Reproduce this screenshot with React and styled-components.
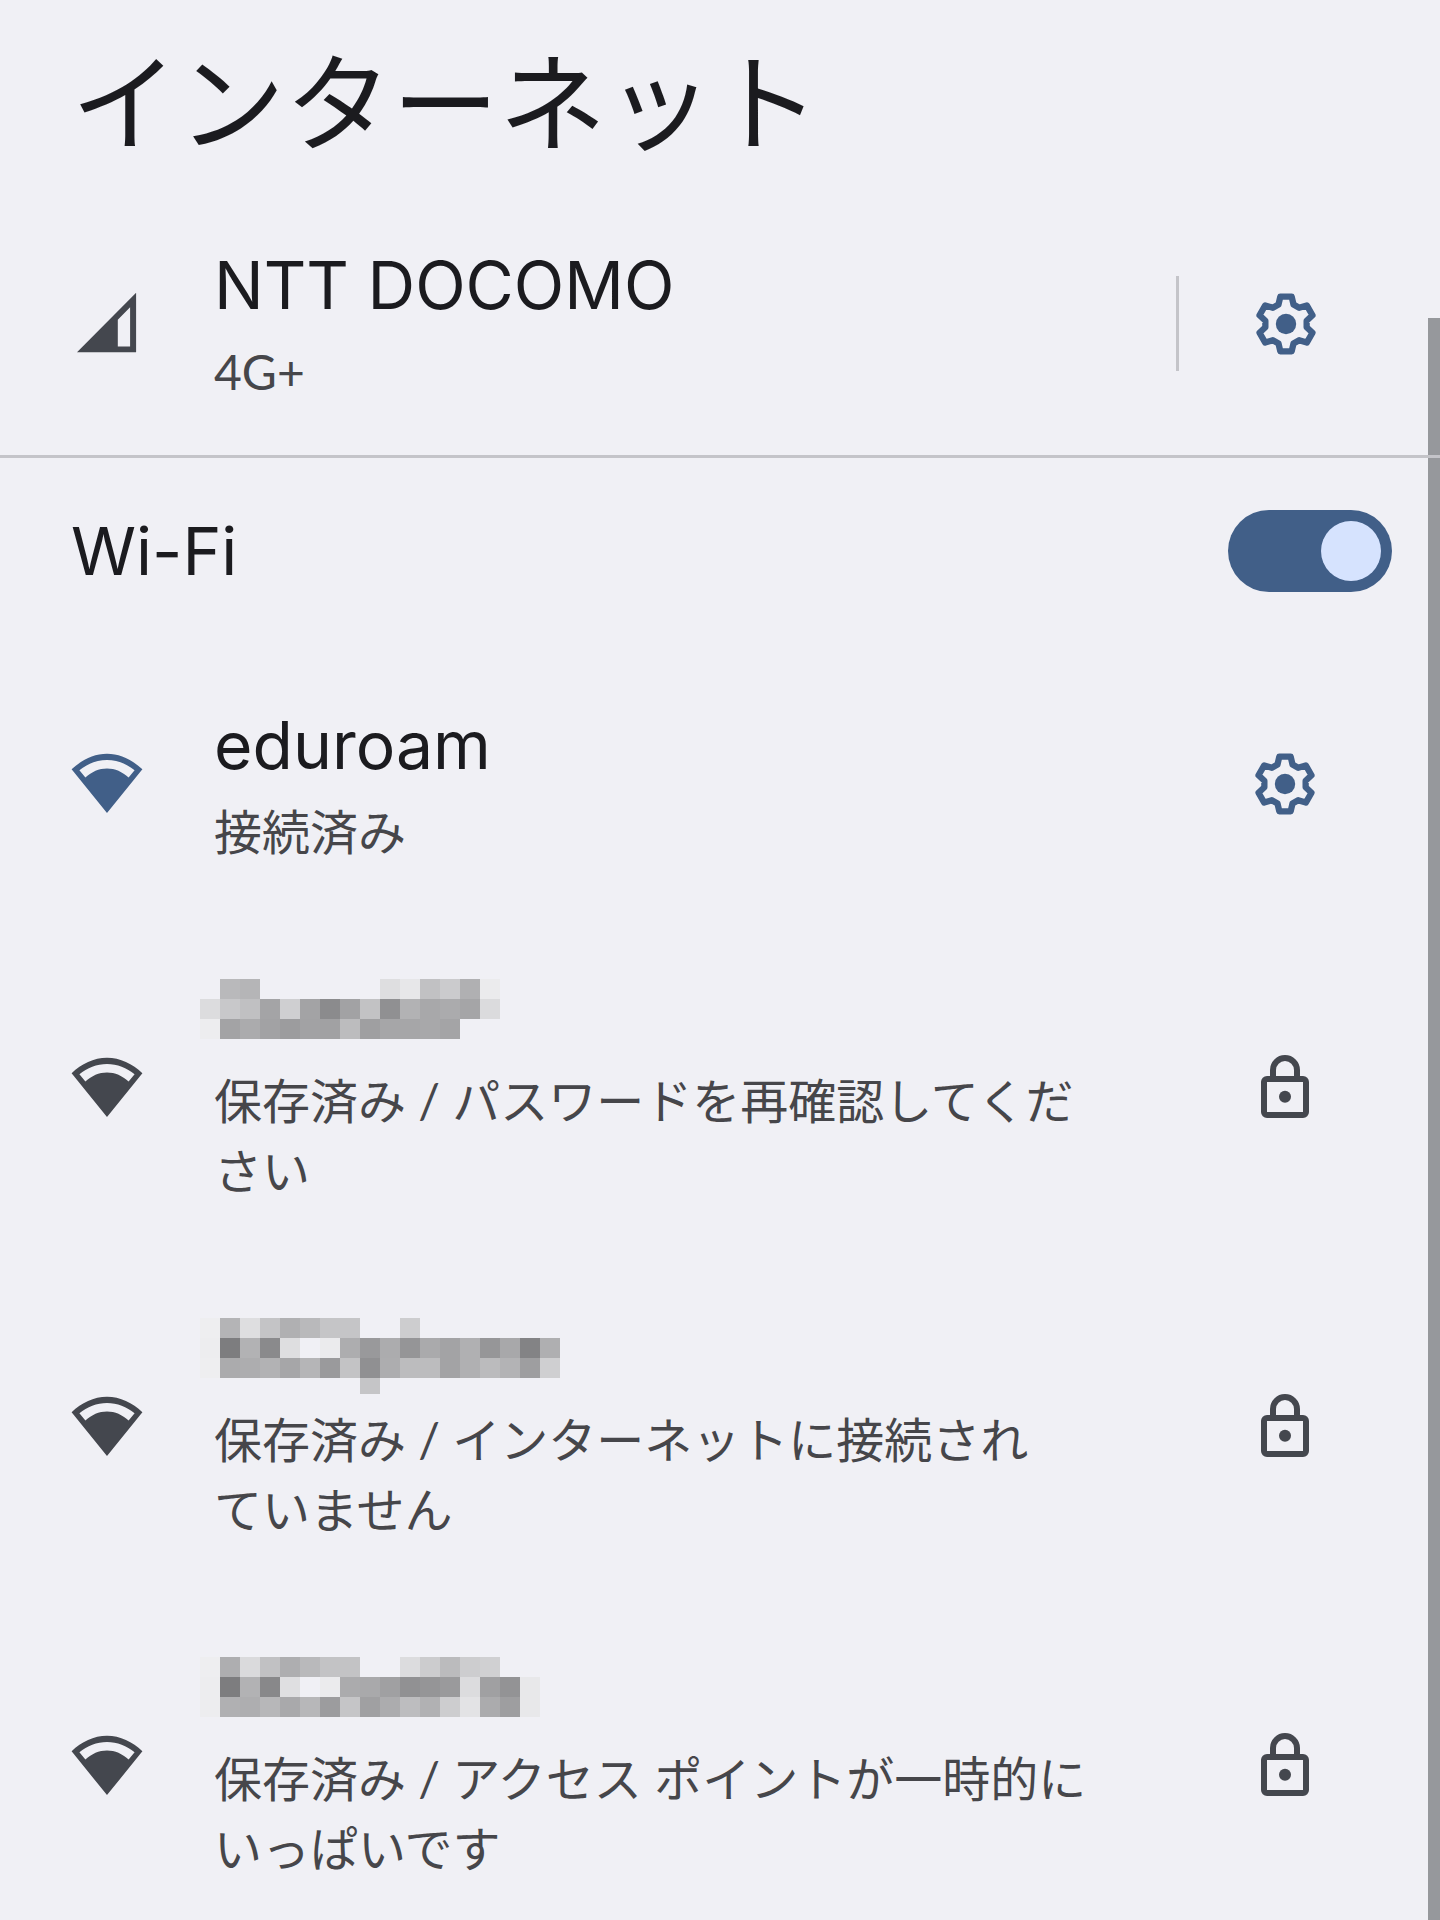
import React, { useState } from 'react'
import styled, { createGlobalStyle } from 'styled-components'

const colors = {
    background: '#f0f0f5',
    text: '#1b1b1f',
    secondary: '#46464a',
    icon: '#44474e',
    accent: '#415f88',
    thumb: '#d6e3fe',
    line: '#c4c4c9',
    scrollbar: '#96989c'
}

const GlobalStyle = createGlobalStyle`
    * {
        box-sizing: border-box;
    }
    body {
        margin: 0;
        background: ${colors.background};
        color: ${colors.text};
        font-family: Inter, "Noto Sans CJK JP", sans-serif;
    }
`

const Screen = styled.main`
    position: relative;
    height: 100vh;
    overflow: hidden;
`

const ScrollArea = styled.div`
    height: 100%;
    overflow-y: auto;
    scrollbar-width: none;
`

const ScrollThumb = styled.div`
    position: absolute;
    top: 318px;
    right: 0;
    bottom: 0;
    width: 12px;
    background: ${colors.scrollbar};
`

const Title = styled.h1`
    height: 188px;
    margin: 0;
    padding: 17px 71px 0;
    font-family: "Noto Sans CJK JP", sans-serif;
    font-size: 107px;
    font-weight: 400;
    line-height: 160px;
`

const Row = styled.div`
    display: flex;
    align-items: center;
    gap: 71px;
    padding: 52px 119px 50px 71px;
`

const MobileRow = styled(Row)`
    position: relative;
    z-index: 1;
    padding-right: 118px;
    padding-bottom: 48px;
    border-bottom: 3px solid ${colors.line};
`

const SwitchRow = styled.label`
    display: flex;
    align-items: center;
    justify-content: space-between;
    height: 186px;
    margin-bottom: 4px;
    padding: 0 48px 0 71px;
    font-size: 66px;
    line-height: 90px;
`

const Switch = styled.input`
    appearance: none;
    display: flex;
    align-items: center;
    width: 164px;
    height: 82px;
    margin: 0;
    padding: 0 11px;
    border-radius: 41px;
    background: ${({checked}) => checked ? colors.accent : colors.line};
    cursor: pointer;
    &::before {
        content: '';
        width: 60px;
        height: 60px;
        margin-left: ${({checked}) => checked ? 'auto' : '0'};
        border-radius: 50%;
        background: ${colors.thumb};
    }
`

const NetworkList = styled.ul`
    margin: 0;
    padding: 0;
    list-style: none;
`

const Details = styled.div`
    flex: 1;
    min-width: 0;
`

const Name = styled.div`
    height: 97px;
    font-size: 66px;
    line-height: 90px;
`

const HiddenName = styled.div`
    height: 97px;
    margin-left: -14px;
    padding-top: 10px;
    svg {
        display: block;
    }
`

const Summary = styled.div`
    font-family: Lato, "Noto Sans CJK JP", sans-serif;
    font-size: 48px;
    line-height: 70px;
    white-space: pre-line;
    color: ${colors.secondary};
`

const Icon = styled.svg`
    display: block;
    flex: none;
    width: 72px;
    height: 72px;
    color: ${({$accent}) => $accent ? colors.accent : colors.icon};
`

const IconButton = styled.button`
    flex: none;
    padding: 0;
    border: 0;
    background: none;
    cursor: pointer;
`

const Separator = styled.div`
    width: 3px;
    height: 95px;
    background: ${colors.line};
`

// six teeth, each one a tip and the valley that follows it
const gearPoints = [0, 60, 120, 180, 240, 300].flatMap(deg => {
    const a = deg * Math.PI / 180
    return [[-2.5, -6.5], [-1.9, -9.1], [1.9, -9.1], [2.5, -6.5]].map(([x, y]) => (
        `${(12 + x * Math.cos(a) - y * Math.sin(a)).toFixed(2)},${(12 + x * Math.sin(a) + y * Math.cos(a)).toFixed(2)}`
    ))
}).join(' ')

const GearIcon = () => (
    <Icon viewBox="0 0 24 24" $accent aria-hidden="true">
        <polygon points={gearPoints} fill="none" stroke="currentColor" strokeWidth="2.1" strokeLinejoin="round" />
        <circle cx="12" cy="12" r="3.4" fill="currentColor" />
    </Icon>
)

const LockIcon = () => (
    <Icon viewBox="0 0 24 24" role="img" aria-label="保護">
        <rect x="5" y="9" width="14" height="12" rx="1" fill="none" stroke="currentColor" strokeWidth="2" />
        <path d="M8 9V6a4 4 0 0 1 8 0v3" fill="none" stroke="currentColor" strokeWidth="2" />
        <circle cx="12" cy="14.9" r="2" fill="currentColor" />
    </Icon>
)

const WifiIcon = ({accent}) => (
    <Icon viewBox="0 0 24 24" $accent={accent} aria-hidden="true">
        <path
            fill="currentColor"
            fillRule="evenodd"
            d="M12 21.7.2 7.1C3.5 4 7.6 1.95 12 1.95S20.5 4 23.8 7.1ZM2.8 7.4l2 2.4C6.9 7.9 9.3 6.8 12 6.8s5.1 1.1 7.2 3l2-2.4C18.6 5.3 15.4 4 12 4S5.4 5.3 2.8 7.4Z"
        />
    </Icon>
)

const SignalIcon = () => (
    <Icon viewBox="0 0 24 24" aria-hidden="true">
        <path
            fill="currentColor"
            fillRule="evenodd"
            d="M2 21.4 21.7 1.6v19.8ZM15.6 10.6v8.9h4.1V6.4Z"
        />
    </Icon>
)

// grey level of every block, '--' is an empty one
const Mosaic = ({rows}) => (
    <svg width="380" height="76" aria-hidden="true" shapeRendering="crispEdges">
        {rows.map((row, y) => row.split(' ').map((v, x) => (
            v === '--' ? null : (
                <rect
                    key={`${x}-${y}`}
                    x={x * 20}
                    y={y * 20}
                    width="20"
                    height="20"
                    fill={`#${v}${v}${v === 'f0' ? 'f5' : (parseInt(v, 16) + 2).toString(16)}`}
                />
            )
        )))}
    </svg>
)

const networks = [
    {
        id: 1,
        name: 'eduroam',
        summary: '接続済み',
        connected: true
    },
    {
        id: 2,
        mosaic: [
            '-- b9 b5 -- -- -- -- -- -- de e7 c1 cb b0 eb',
            'dc c8 c0 a4 cf a3 8b a2 c2 90 b2 a8 ab a5 db',
            'ed a3 ab a2 9c a2 a1 bc 9f a6 a6 a8 a4'
        ],
        summary: '保存済み / パスワードを再確認してくだ\nさい'
    },
    {
        id: 3,
        mosaic: [
            'ee b4 de c4 b0 b9 c5 c5 -- -- cd',
            'ed 7d b2 8a de f0 eb ad 99 ac 95 aa a3 b0 96 a8 83 af',
            'ee ab ad b2 a6 b5 9a c3 90 ad bc bc a3 b0 bb b3 9e cf',
            '-- -- -- -- -- -- -- -- c5'
        ],
        summary: '保存済み / インターネットに接続され\nていません'
    },
    {
        id: 4,
        mosaic: [
            'ee ae da c1 ae b9 c3 c3 -- -- dc cc bb cd d0',
            'ed 7d b2 88 df f0 eb ab a9 a0 91 95 9a dc a0 93 e8',
            'ed b0 ae b7 a9 b7 9c c5 a0 ac bd b1 cd e3 ab 9e e8'
        ],
        summary: '保存済み / アクセス ポイントが一時的に\nいっぱいです'
    }
]

const Network = ({name, mosaic, summary, connected}) => (
    <Row as="li">
        <WifiIcon accent={connected} />
        <Details>
            {mosaic ? <HiddenName><Mosaic rows={mosaic} /></HiddenName> : <Name>{name}</Name>}
            <Summary>{summary}</Summary>
        </Details>
        {connected ? <IconButton type="button" aria-label="設定"><GearIcon /></IconButton> : <LockIcon />}
    </Row>
)

const App = () => {
    const [wifi, setWifi] = useState(true)

    return (
        <Screen lang="ja">
            <GlobalStyle />
            <ScrollThumb />
            <ScrollArea>
                <Title>インターネット</Title>
                <MobileRow>
                    <SignalIcon />
                    <Details>
                        <Name>NTT DOCOMO</Name>
                        <Summary>4G+</Summary>
                    </Details>
                    <Separator />
                    <IconButton type="button" aria-label="設定"><GearIcon /></IconButton>
                </MobileRow>
                <SwitchRow>
                    Wi-Fi
                    <Switch
                        type="checkbox"
                        role="switch"
                        checked={wifi}
                        onChange={e => setWifi(e.target.checked)}
                    />
                </SwitchRow>
                <NetworkList>
                    {networks.map(({id, ...network}) => <Network key={id} {...network} />)}
                </NetworkList>
            </ScrollArea>
        </Screen>
    )
}

export default App
